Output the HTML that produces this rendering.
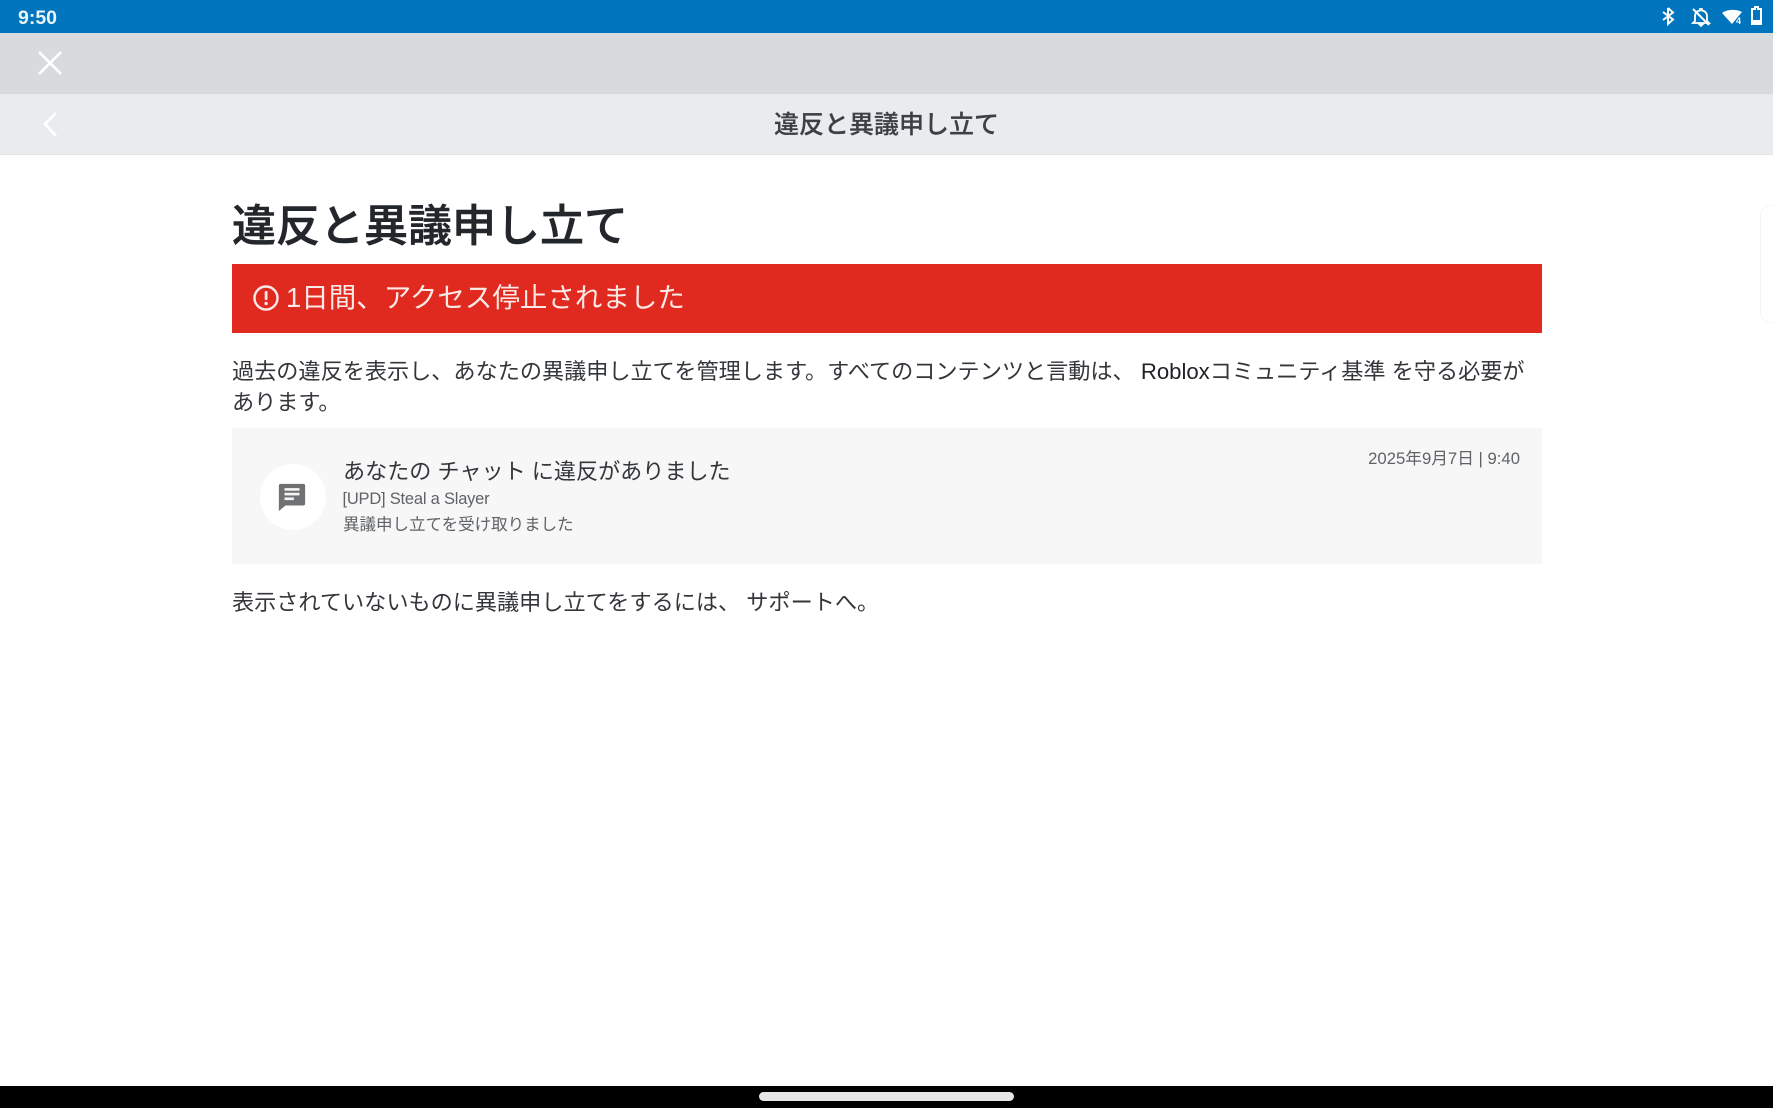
<!DOCTYPE html>
<html lang="ja">
<head>
<meta charset="utf-8">
<title>違反と異議申し立て</title>
<style>
html,body{margin:0;padding:0;background:#fff;}
body{width:1773px;height:1108px;position:relative;overflow:hidden;font-family:"Liberation Sans","Noto Sans CJK JP",sans-serif;color:#33363a;}
.a{position:absolute;white-space:nowrap;}
</style>
</head>
<body>
<div class="a" style="left:0;top:0;width:1773px;height:33px;background:#0074bd;"></div>
<div class="a" style="left:18px;top:6px;font-size:19.5px;line-height:24px;font-weight:700;color:#eaf4fb;">9:50</div>
<svg class="a" style="left:1655px;top:5px;" width="118" height="24" viewBox="0 0 118 24">
  <path d="M13 3 L13 19 L18 14.5 L8 7 M13 3 L18 7.5 L8 15" fill="none" stroke="#fff" stroke-width="2"/>
  <path d="M52 16 L52 11.5 C52 8 50 6 47 5.5 L47 4 L45 4 L45 5.5 C42 6 40 8 40 11.5 L40 16 L38 18 L54 18 Z M44 19 L48 19 L46 21 Z" fill="none" stroke="#fff" stroke-width="1.8"/>
  <path d="M38 4 L54 20" stroke="#fff" stroke-width="2"/>
  <path d="M67 8 C72 4 82 4 87 7 L77 19 Z" fill="#fff"/>
  <text x="81" y="19" font-size="9" font-weight="700" fill="#fff" font-family="Liberation Sans,sans-serif">4</text>
  <path d="M97 4 L100 4 L100 2 L103 2 L103 4 L106 4 L106 19 L97 19 Z" fill="none" stroke="#fff" stroke-width="2"/>
  <rect x="97" y="15" width="9" height="4" fill="#fff"/>
</svg>

<div class="a" style="left:0;top:33px;width:1773px;height:61px;background:#d8dbde;"></div>
<svg class="a" style="left:36px;top:49px;" width="28" height="28" viewBox="0 0 28 28"><path d="M3 3 L25 25 M25 3 L3 25" stroke="#fff" stroke-width="2.6" fill="none"/></svg>

<div class="a" style="left:0;top:94px;width:1773px;height:60px;background:#e9ecef;"></div>
<div class="a" style="left:0;top:154px;width:1773px;height:1px;background:#e3e5e7;"></div>
<svg class="a" style="left:41px;top:110px;" width="18" height="28" viewBox="0 0 18 28"><path d="M15 3 L4 14 L15 26" stroke="#fff" stroke-width="2.6" fill="none"/></svg>
<div class="a" style="left:0;top:107px;width:1773px;text-align:center;font-size:25px;line-height:36px;font-weight:500;color:#3c4045;-webkit-text-stroke:0.2px #3c4045;">違反と異議申し立て</div>

<div class="a" style="left:232px;top:195px;font-size:44px;line-height:64px;font-weight:500;color:#23262a;-webkit-text-stroke:0.6px #23262a;">違反と異議申し立て</div>

<div class="a" style="left:232px;top:264px;width:1310px;height:69px;background:#e0291f;"></div>
<svg class="a" style="left:252px;top:284px;" width="28" height="28" viewBox="0 0 28 28">
  <circle cx="14" cy="14" r="11.5" fill="none" stroke="#fbe9e7" stroke-width="2.4"/>
  <rect x="12.7" y="7" width="2.8" height="9" rx="1" fill="#fbe9e7"/>
  <circle cx="14.1" cy="19.5" r="1.7" fill="#fbe9e7"/>
</svg>
<div class="a" style="left:286px;top:279px;font-size:27.5px;line-height:38px;color:#fbe9e7;">1日間、アクセス停止されました</div>

<div class="a" style="left:232px;top:356px;font-size:22.15px;line-height:32px;">過去の違反を表示し、あなたの異議申し立てを管理します。すべてのコンテンツと言動は、 <span style="color:#1f2226;">Roblox</span>コミュニティ基準 を守る必要が</div>
<div class="a" style="left:232px;top:387px;font-size:22.15px;line-height:32px;">あります。</div>

<div class="a" style="left:232px;top:428px;width:1310px;height:136px;background:#f7f7f8;"></div>
<div class="a" style="left:260px;top:464px;width:66px;height:66px;border-radius:50%;background:#fff;"></div>
<svg class="a" style="left:277px;top:481px;" width="30" height="32" viewBox="0 0 32 32">
  <path d="M4 2 H28 Q30 2 30 4 V23 Q30 25 28 25 H9 L2 31 V4 Q2 2 4 2 Z" fill="#707173"/>
  <rect x="8" y="6.5" width="16" height="2.8" fill="#f4f4f4"/>
  <rect x="8" y="11.5" width="16" height="2.8" fill="#f4f4f4"/>
  <rect x="8" y="16.5" width="10" height="2.8" fill="#f4f4f4"/>
</svg>
<div class="a" style="left:343px;top:456px;font-size:22.1px;line-height:32px;">あなたの チャット に違反がありました</div>
<div class="a" style="left:342.5px;top:487px;font-size:16.5px;line-height:24px;color:#5f6266;letter-spacing:-0.22px;">[UPD] Steal a Slayer</div>
<div class="a" style="left:343px;top:513px;font-size:16.5px;line-height:24px;color:#5f6266;">異議申し立てを受け取りました</div>
<div class="a" style="right:253px;top:447px;font-size:16.7px;line-height:24px;color:#5f6266;">2025年9月7日 | 9:40</div>

<div class="a" style="left:232px;top:587px;font-size:22.15px;line-height:32px;">表示されていないものに異議申し立てをするには、 サポートへ。</div>

<div class="a" style="left:1760px;top:205px;width:20px;height:118px;box-sizing:border-box;border:1px solid #f6f6f6;border-radius:14px;background:#fff;"></div>

<div class="a" style="left:0;top:1086px;width:1773px;height:22px;background:#000;"></div>
<div class="a" style="left:759px;top:1092px;width:255px;height:9px;border-radius:5px;background:#e6e6e6;"></div>
</body>
</html>
